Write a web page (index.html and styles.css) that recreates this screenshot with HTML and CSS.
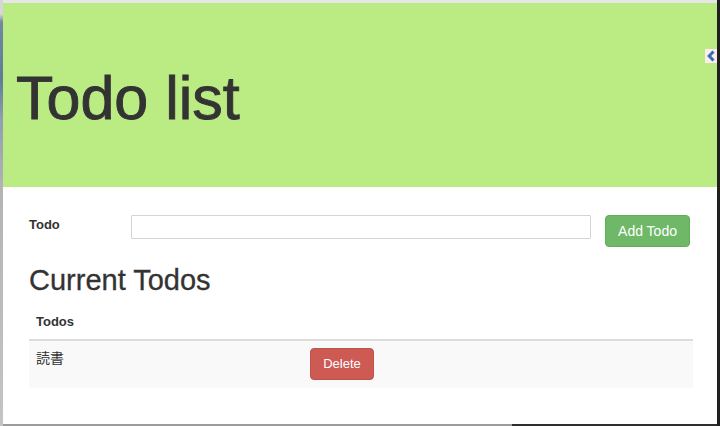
FILE: index.html
```html
<!DOCTYPE html>
<html lang="ja">
<head>
<meta charset="utf-8">
<title>Todo list</title>
<link rel="stylesheet" href="styles.css">
</head>
<body>
<div class="screen">
  <div class="desk-left"></div>
  <div class="window">
    <div class="topline"></div>
    <div class="page">
      <header class="jumbotron">
        <h1 class="title">Todo list</h1>
      </header>
      <main class="content">
        <form class="todo-form">
          <label class="todo-label" for="todo">Todo</label>
          <input class="todo-input" id="todo" type="text">
          <button class="btn btn-success" type="button">Add Todo</button>
        </form>
        <h2 class="section-title">Current Todos</h2>
        <table class="todo-table">
          <thead>
            <tr><th class="col-name">Todos</th><th></th></tr>
          </thead>
          <tbody>
            <tr>
              <td class="todo-name">読書</td>
              <td><button class="btn btn-danger" type="button">Delete</button></td>
            </tr>
          </tbody>
        </table>
      </main>
      <div class="side-tab">
        <svg width="8" height="12" viewBox="0 0 8 12"><polyline points="6.5,1.5 2.2,6 6.5,10.5" fill="none" stroke="#3b6cb6" stroke-width="3"/></svg>
      </div>
    </div>
    <div class="bottomline"></div>
  </div>
  <div class="desk-right"></div>
</div>
</body>
</html>
```

FILE: styles.css
```css
html, body {
  margin: 0;
  padding: 0;
}
body {
  width: 720px;
  height: 426px;
  overflow: hidden;
  font-family: "Liberation Sans", Arial, "Noto Sans CJK JP", sans-serif;
  color: #333;
}
.screen {
  display: flex;
  width: 720px;
  height: 426px;
}
.desk-left {
  width: 3px;
  background: linear-gradient(to bottom, #d6d6d6 0, #d6d6d6 14px, #72899f 22px, #617c95 80px, #8fa0b0 120px, #b4b4b4 190px, #c4c4c4 100%);
}
.desk-right {
  width: 3px;
  background: #1f1f1f;
}
.window {
  width: 714px;
  display: flex;
  flex-direction: column;
}
.topline {
  height: 3px;
  background: #e6e6e6;
}
.bottomline {
  height: 2px;
  background: linear-gradient(to right, #9c9c9c 0, #9c9c9c 509px, #2e2e2e 509px);
}
.page {
  position: relative;
  height: 421px;
  background: #fff;
}
.jumbotron {
  height: 184px;
  box-sizing: border-box;
  background: #bbec83;
  padding: 65px 0 0 13px;
}
.title {
  margin: 0;
  font-size: 61px;
  line-height: 61px;
  font-weight: 500;
  color: #333;
  -webkit-text-stroke: 0.9px #333;
}
.content {
  padding: 28px 23px 0 26px;
}
.todo-form {
  display: flex;
  align-items: flex-start;
  margin: 0;
}
.todo-label {
  width: 102px;
  font-size: 13px;
  font-weight: bold;
  line-height: 20px;
}
.todo-input {
  width: 460px;
  height: 24px;
  box-sizing: border-box;
  border: 1px solid #d4d4d4;
  border-radius: 1px;
  margin: 0;
  padding: 2px 6px;
}
.btn {
  font-family: "Liberation Sans", Arial, sans-serif;
  color: #fff;
  height: 32px;
  box-sizing: border-box;
  border-radius: 4px;
  line-height: 20px;
  cursor: pointer;
}
.btn-success {
  margin-left: 14px;
  width: 85px;
  font-size: 14px;
  background: #6eb867;
  border: 1px solid #62ad5b;
  padding: 5px 0;
}
.btn-danger {
  width: 64px;
  font-size: 13px;
  background: #cd5a53;
  border: 1px solid #c0514b;
  padding: 5px 0;
}
.section-title {
  margin: 18px 0 7px;
  font-size: 29px;
  line-height: 31px;
  font-weight: 500;
  color: #333;
  -webkit-text-stroke: 0.3px #333;
}
.todo-table {
  width: 664px;
  border-collapse: collapse;
  font-size: 13px;
}
.todo-table th {
  text-align: left;
  font-weight: bold;
  line-height: 20px;
  padding: 9px 7px 7px;
  border-bottom: 2px solid #dddddd;
}
.col-name {
  width: 260px;
}
.todo-table td {
  background: #f9f9f9;
  padding: 7px 7px 8px;
  vertical-align: top;
  line-height: 20px;
}
.todo-name {
  font-size: 14px;
  font-family: "Liberation Sans", "Noto Sans CJK JP", sans-serif;
}
.side-tab {
  position: absolute;
  top: 46px;
  right: 0;
  width: 12px;
  height: 14px;
  background: #fbeded;
  display: flex;
  align-items: center;
  justify-content: center;
}
```
